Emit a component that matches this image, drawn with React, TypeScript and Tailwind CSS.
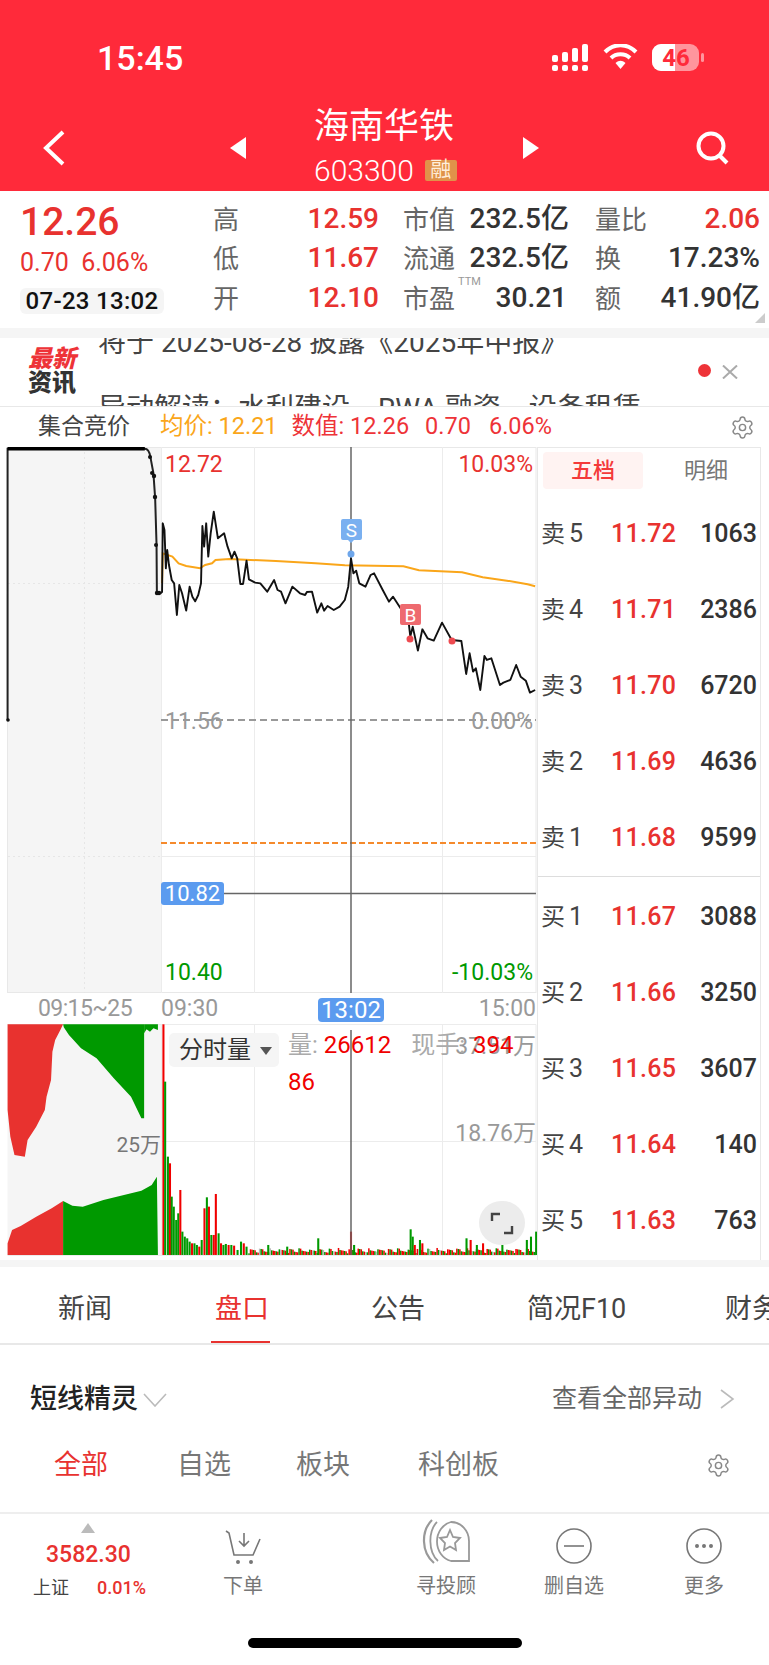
import React from "react";
import { Settings } from "lucide-react";

const PRICE_LINE =
  "M470,458 L472,250 L477,270 L481,385 L485,330 L490,375 L498,420 L505,430 L513,525 L520,435 L528,460 L540,512 L550,440 L558,470 L566,484 L575,465 L583,430 L587,258 L592,320 L598,250 L604,350 L611,280 L620,215 L632,295 L650,280 L660,320 L672,355 L680,335 L688,355 L697,432 L705,432 L715,362 L722,418 L740,428 L755,430 L775,455 L795,420 L805,450 L815,455 L828,490 L848,440 L870,460 L885,465 L890,456 L905,455 L920,518 L932,490 L940,512 L950,498 L968,510 L985,500 L1000,480 L1010,440 L1018,355 L1025,400 L1033,392 L1042,430 L1060,440 L1075,405 L1085,400 L1110,450 L1128,485 L1140,470 L1165,510 L1175,515 L1185,545 L1190,590 L1197,560 L1212,632 L1225,568 L1240,595 L1258,602 L1282,548 L1310,600 L1338,603 L1352,702 L1362,640 L1372,695 L1380,685 L1393,750 L1405,648 L1412,660 L1425,655 L1450,735 L1460,728 L1480,720 L1497,675 L1510,710 L1525,722 L1537,758 L1552,750";
const AVG_LINE =
  "M470,430 L472,340 L500,350 L518,370 L540,378 L580,385 L595,375 L615,370 L625,360 L665,357 L800,363 L915,370 L1000,376 L1170,379 L1215,391 L1340,397 L1400,412 L1470,422 L1530,433 L1552,439";
const AUCTION_LINE = "M22,840 L22,26 L420,26 Q432,26 436,50 L445,100 L450,175 L454,315 L455,458 L470,458";

const BIG_BARS: [number, number, string][] = [
  [471, 133, "#f00000"], [476, 305, "#009900"], [484, 530, "#009900"], [490, 550, "#f00000"],
  [495, 650, "#009900"], [501, 680, "#009900"], [508, 720, "#009900"], [514, 700, "#009900"],
  [520, 630, "#f00000"], [526, 755, "#009900"], [533, 770, "#009900"], [540, 775, "#009900"],
  [547, 785, "#009900"], [554, 790, "#f00000"], [561, 790, "#009900"], [568, 795, "#009900"],
  [575, 800, "#f00000"], [582, 780, "#009900"], [590, 685, "#f00000"], [597, 652, "#009900"],
  [603, 680, "#f00000"], [610, 765, "#009900"], [617, 765, "#f00000"], [623, 642, "#f00000"],
  [631, 760, "#009900"], [638, 790, "#f00000"], [645, 795, "#009900"], [652, 792, "#009900"],
  [660, 795, "#f00000"], [668, 795, "#009900"], [676, 797, "#f00000"], [686, 810, "#009900"],
  [696, 785, "#009900"], [704, 790, "#f00000"], [712, 800, "#009900"], [775, 795, "#009900"],
  [830, 800, "#009900"], [920, 775, "#009900"], [1015, 755, "#f00000"], [1024, 795, "#009900"],
  [1188, 748, "#009900"], [1194, 770, "#009900"], [1200, 795, "#f00000"], [1215, 780, "#009900"],
  [1222, 790, "#f00000"], [1350, 775, "#009900"], [1362, 780, "#f00000"], [1380, 795, "#009900"],
  [1398, 790, "#f00000"], [1454, 795, "#009900"], [1525, 780, "#009900"], [1537, 770, "#009900"],
  [1552, 755, "#009900"],
];

// the low bars between the spikes
const LOW_BARS: [number, number, string][] = Array.from({ length: 190 }, (_, i) => {
  const x = 720 + i * 4.4;
  const top = 820 - ((i * 37) % 13) - ((i * 11) % 5);
  const c = (i * 7) % 5 < 2 ? "#009900" : (i * 13) % 7 === 0 ? "#bbbbbb" : "#f00000";
  return [x, top, c];
});

const SELLS = [
  ["卖", "5", "11.72", "1063"],
  ["卖", "4", "11.71", "2386"],
  ["卖", "3", "11.70", "6720"],
  ["卖", "2", "11.69", "4636"],
  ["卖", "1", "11.68", "9599"],
];
const BUYS = [
  ["买", "1", "11.67", "3088"],
  ["买", "2", "11.66", "3250"],
  ["买", "3", "11.65", "3607"],
  ["买", "4", "11.64", "140"],
  ["买", "5", "11.63", "763"],
];

function StatusIcons() {
  return (
    <svg width="153" height="28" viewBox="552 44 153 28" className="block">
      <g fill="#fff">
        <rect x="552" y="55" width="6" height="7" rx="2" />
        <rect x="562" y="52" width="6" height="10" rx="2" />
        <rect x="572" y="48" width="6" height="14" rx="2" />
        <rect x="582" y="44" width="6" height="18" rx="2" />
        <rect x="552" y="65" width="6" height="6" rx="2" />
        <rect x="562" y="65" width="6" height="6" rx="2" />
        <rect x="572" y="65" width="6" height="6" rx="2" />
        <rect x="582" y="65" width="6" height="6" rx="2" />
      </g>
      <path d="M605 52 C614 43 627 43 636 52" stroke="#fff" strokeWidth="4" fill="none" />
      <path d="M611 58 C616 53 625 53 630 58" stroke="#fff" strokeWidth="4" fill="none" />
      <path d="M615.5 63 L620.5 69 L625.5 63 C622 60 619 60 615.5 63 Z" fill="#fff" />
      <rect x="652" y="44" width="47" height="27" rx="9" fill="#fff" fillOpacity="0.5" />
      <path d="M661 44 H675 V71 H661 A9 9 0 0 1 652 62 V53 A9 9 0 0 1 661 44 Z" fill="#fff" />
      <rect x="701" y="53" width="3" height="9" rx="1.5" fill="#fff" fillOpacity="0.5" />
      <text x="676" y="66" textAnchor="middle" fontSize="24" fontWeight="700" fill="#ff2a3a">46</text>
    </svg>
  );
}

function Stat({ label, value, red, ttm }: { label: string; value: string; red?: boolean; ttm?: boolean }) {
  return (
    <div className="flex h-[39.5px] items-center justify-between">
      <span className="relative mt-[3px] text-[26px] text-[#666666]">
        {label}
        {ttm && <span className="absolute left-[55px] top-[-6px] text-[11px] text-[#999999]">TTM</span>}
      </span>
      <span className={`text-[28px] font-medium ${red ? "text-[#e8322f]" : "text-[#333333]"} ${ttm ? "mr-[2px]" : ""}`}>{value}</span>
    </div>
  );
}

function BookRow({ row }: { row: string[] }) {
  return (
    <div className="flex h-[76px] items-center pl-[3px] pr-[3px]">
      <span className="w-[28px] text-[24px] text-[#444444]">{row[0]}</span>
      <span className="w-[42px] text-[25px] text-[#444444]">{row[1]}</span>
      <span className="text-[25px] font-medium tracking-[0.3px] text-[#e8322f]">{row[2]}</span>
      <span className="ml-auto text-[25px] font-medium text-[#333333]">{row[3]}</span>
    </div>
  );
}

function ToolButton({ label, children, width }: { label: string; children: React.ReactNode; width: string }) {
  return (
    <div className={`flex flex-col items-center ${width}`}>
      <div className="flex h-[46px] items-end justify-center">{children}</div>
      <span className="mt-[10px] whitespace-nowrap text-[20px] leading-[24px] text-[#777777]">{label}</span>
    </div>
  );
}

export default function App() {
  return (
    <div className="h-[1665px] w-[769px] overflow-hidden bg-white font-[Roboto,'Noto_Sans_CJK_SC',sans-serif]">
      {/* header */}
      <div className="h-[191px] bg-[#ff2a3a] text-white">
        <div className="flex h-[105px] items-start pt-[44px]">
          <span className="ml-[97px] text-[34px] font-medium leading-[28px]">15:45</span>
          <div className="ml-auto mr-[64px]"><StatusIcons /></div>
        </div>
        <div className="flex items-start">
          <svg width="24" height="36" viewBox="0 0 24 36" className="ml-[42px] mt-[25px]">
            <path d="M21 2 L4 18 L21 34" stroke="#fff" strokeWidth="4" fill="none" />
          </svg>
          <svg width="16" height="22" viewBox="0 0 16 22" className="ml-[164px] mt-[32px]">
            <path d="M16 0 V22 L0 11 Z" fill="#fff" />
          </svg>
          <div className="ml-[68px] w-[209px]">
            <div className="text-[35px] leading-[44px]">海南华铁</div>
            <div className="mt-[9px] flex h-[24px] items-center">
              <span className="text-[30px] font-light">603300</span>
              <span className="ml-[11px] flex h-[21px] w-[32px] items-center justify-center rounded-[2px] bg-[#e0934a] text-[21px] text-[#ffeeda]">融</span>
            </div>
          </div>
          <svg width="16" height="22" viewBox="0 0 16 22" className="mt-[32px]">
            <path d="M0 0 V22 L16 11 Z" fill="#fff" />
          </svg>
          <svg width="34" height="34" viewBox="0 0 34 34" className="ml-[157px] mt-[26px]">
            <circle cx="15" cy="15" r="12.5" stroke="#fff" strokeWidth="4" fill="none" />
            <path d="M23 24 L31 32" stroke="#fff" strokeWidth="4" fill="none" />
          </svg>
        </div>
      </div>

      {/* quote */}
      <div className="relative flex h-[137px]">
        <div className="ml-[20px] w-[193px]">
          <div className="mt-[8px] text-[39px] font-medium leading-[46px] text-[#e8322f]">12.26</div>
          <div className="mt-[2px] text-[25px] leading-[32px] text-[#e8322f]">0.70&nbsp;&nbsp;6.06%</div>
          <div className="mt-[9px] flex h-[26px] w-[144px] items-center justify-center rounded-[6px] bg-[#f5f5f5] text-[24px] font-medium tracking-[0.3px] text-[#111111]">07-23 13:02</div>
        </div>
        <div className="mt-[8px] w-[166px]">
          <Stat label="高" value="12.59" red />
          <Stat label="低" value="11.67" red />
          <Stat label="开" value="12.10" red />
        </div>
        <div className="ml-[24px] mt-[8px] w-[166px]">
          <Stat label="市值" value="232.5亿" />
          <Stat label="流通" value="232.5亿" />
          <Stat label="市盈" value="30.21" ttm />
        </div>
        <div className="ml-[26px] mt-[8px] w-[165px]">
          <Stat label="量比" value="2.06" red />
          <Stat label="换" value="17.23%" />
          <Stat label="额" value="41.90亿" />
        </div>
        <div className="absolute bottom-[5px] right-[4px] h-0 w-0 border-b-[10px] border-l-[10px] border-b-[#cccccc] border-l-transparent" />
      </div>
      <div className="h-[10px] bg-[#f5f5f5]" />

      {/* news ticker, caught mid scroll */}
      <div className="relative h-[68px] overflow-hidden">
        <div className="ml-[98px] mt-[-13px] whitespace-nowrap text-[28px] leading-[36px] text-[#444444]">将于 2025-08-28 披露《2025年中报》</div>
        <div className="ml-[98px] mt-[30px] whitespace-nowrap text-[28px] leading-[36px] text-[#444444]">异动解读：水利建设、RWA 融资、设备租赁...</div>
        <div className="absolute left-[28px] top-[10px] text-[24px] font-black italic leading-[22px] text-[#ee3338]">最新</div>
        <div className="absolute left-[28px] top-[34px] text-[24px] font-black leading-[22px] text-[#333333]">资讯</div>
        <div className="absolute left-[698px] top-[26px] h-[13px] w-[13px] rounded-full bg-[#ee3338]" />
        <svg width="16" height="14" viewBox="0 0 16 14" className="absolute left-[722px] top-[27px]">
          <path d="M1 0.5 L15 13.5 M15 0.5 L1 13.5" stroke="#aaaaaa" strokeWidth="2" />
        </svg>
      </div>

      {/* chart title */}
      <div className="flex h-[41px] items-center border-t border-[#e8e8e8] text-[23.5px]">
        <span className="ml-[38px] text-[23px] text-[#444444]">集合竞价</span>
        <span className="ml-[30px] text-[#faa61a]">均价: 12.21</span>
        <span className="ml-[14px] text-[#ee3338]">数值: 12.26</span>
        <span className="ml-[16px] text-[#ee3338]">0.70</span>
        <span className="ml-[18px] text-[#ee3338]">6.06%</span>
        <Settings className="ml-auto mr-[14px] h-[25px] w-[25px] text-[#888888]" strokeWidth={1.4} />
      </div>

      <div className="flex h-[813px]">
        <div className="w-[537px]">
          {/* price chart */}
          <div className="relative h-[546px]">
            <svg width="537" height="546" viewBox="0 447 537 546" className="absolute inset-0">
              <rect x="7.5" y="447.5" width="153.5" height="545" fill="#f5f5f5" />
              <rect x="7.5" y="447.5" width="528.5" height="545" fill="none" stroke="#e8e8e8" />
              <path d="M161.5 447 V993 M254.5 447 V993 M442.5 447 V993 M161 583.5 H536 M161 856.5 H536" stroke="#ececec" />
              <path d="M84.5 447 V993 M8 583.5 H161 M8 856.5 H161" stroke="#e6e6e6" strokeDasharray="2 3" />
              <path d="M161 720 H536" stroke="#999999" strokeDasharray="7 4" strokeWidth="2" />
              <path d="M161 843 H536" stroke="#f58a2c" strokeDasharray="6 3" strokeWidth="2" />
              <path d="M224 893.5 H536" stroke="#666666" strokeWidth="1.5" />
              <path d="M351 447 V993" stroke="#666666" strokeWidth="1.5" />
              <g transform="translate(0 440) scale(0.3448 0.3333)" fill="none">
                <path d={AVG_LINE} stroke="#faa61a" strokeWidth="2" vectorEffect="non-scaling-stroke" />
                <path d={AUCTION_LINE} stroke="#222222" strokeWidth="2" vectorEffect="non-scaling-stroke" />
                <path d="M22,26 L420,26" stroke="#000" strokeWidth="3.5" vectorEffect="non-scaling-stroke" />
                <path d={PRICE_LINE} stroke="#111111" strokeWidth="1.9" strokeLinejoin="round" vectorEffect="non-scaling-stroke" />
              </g>
              <g fill="#111111">
                <circle cx="8" cy="720" r="1.8" />
                <circle cx="150" cy="457" r="2" />
                <circle cx="152" cy="473" r="2" />
                <circle cx="154" cy="476" r="2.2" />
                <circle cx="155" cy="497" r="2.2" />
                <circle cx="156" cy="545" r="2" />
                <circle cx="157" cy="593" r="2.2" />
                <circle cx="159" cy="593" r="2.2" />
              </g>
              <path d="M343 519 H360 A2 2 0 0 1 362 521 V538 A2 2 0 0 1 360 540 H354 L351 543 L348 540 H343 A2 2 0 0 1 341 538 V521 A2 2 0 0 1 343 519 Z" fill="#7ab0f0" />
              <text x="351.5" y="537" textAnchor="middle" fontSize="19" fill="#fff">S</text>
              <circle cx="351" cy="554" r="3.5" fill="#6ea6ea" />
              <rect x="400" y="604" width="21" height="21" rx="2" fill="#ee6a6f" />
              <text x="410.5" y="622" textAnchor="middle" fontSize="19" fill="#fff">B</text>
              <circle cx="410" cy="639" r="3.5" fill="#ee4a50" />
              <circle cx="452" cy="641" r="3.5" fill="#ee4a50" />
            </svg>
            <span className="absolute left-[165px] top-[1px] text-[23px] text-[#e8322f]">12.72</span>
            <span className="absolute right-[4px] top-[1px] text-[23px] text-[#e8322f]">10.03%</span>
            <span className="absolute left-[165px] top-[258px] text-[23px] text-[#999999]">11.56</span>
            <span className="absolute right-[4px] top-[258px] text-[23px] text-[#999999]">0.00%</span>
            <span className="absolute left-[161px] top-[435px] flex h-[23px] w-[63px] items-center justify-center rounded-[3px] bg-[#5b9bef] text-[22px] text-white">10.82</span>
            <span className="absolute left-[165px] top-[509px] text-[23px] text-[#009900]">10.40</span>
            <span className="absolute right-[4px] top-[509px] text-[23px] text-[#009900]">-10.03%</span>
          </div>

          {/* time axis */}
          <div className="relative flex h-[31px] items-center pt-[2px] text-[23px] text-[#999999]">
            <span className="ml-[38px] w-[123px] tracking-[-0.6px]">09:15~25</span>
            <span className="w-[157px]">09:30</span>
            <span className="flex h-[24px] w-[66px] items-center justify-center rounded-[4px] bg-[#5b9bef] text-[24px] text-white">13:02</span>
            <span className="ml-auto mr-[1px]">15:00</span>
          </div>

          {/* volume */}
          <div className="relative h-[236px]">
            <svg width="537" height="236" viewBox="0 1024 537 236" className="absolute inset-0">
              <rect x="7.5" y="1024" width="153.5" height="231" fill="#f5f5f5" />
              <path d="M7.5 1024.5 H536 V1255.5 H7.5 M161.5 1024 V1255 M254.5 1024 V1255 M442.5 1024 V1255 M161 1141.5 H536" stroke="#ececec" fill="none" />
              <g transform="translate(0 980) scale(0.3448 0.3333)">
                <path d="M22,133 L183,133 L175,150 L160,180 L152,215 L148,300 L135,350 L130,390 L105,440 L80,480 L72,530 L42,525 L30,470 L22,390 Z" fill="#e8322f" />
                <path d="M183,133 L418,133 L418,415 L410,415 L380,350 L330,295 L280,235 L235,205 L200,165 L185,142 Z" fill="#009900" />
                <path d="M418,133 L458,133 L458,150 L445,145 L435,155 L425,148 L418,160 Z" fill="#009900" />
                <path d="M22,825 L22,790 L35,750 L60,738 L105,710 L150,685 L183,663 L183,825 Z" fill="#e8322f" />
                <path d="M183,825 L183,663 L210,677 L240,680 L300,660 L410,632 L440,615 L455,590 L458,825 Z" fill="#009900" />
                {LOW_BARS.map(([x, top, c], i) => (
                  <rect key={i} x={x} y={top} width="4.4" height={825 - top} fill={c} />
                ))}
                {BIG_BARS.map(([x, top, c], i) => (
                  <rect key={i} x={x} y={top} width="6" height={825 - top} fill={c} />
                ))}
              </g>
              <path d="M351 1030 V1255" stroke="#666666" strokeWidth="1.5" />
            </svg>
            <span className="absolute right-[376px] top-[106px] text-[21px] text-[#777777]">25万</span>
            <span className="absolute right-[1px] top-[6px] text-[23px] text-[#999999]">37.51万</span>
            <span className="absolute right-[1px] top-[93px] text-[23px] text-[#999999]">18.76万</span>
            <div className="absolute left-[169px] top-[9px] flex h-[34px] w-[110px] items-center rounded-[5px] bg-[#f5f5f5] pl-[10px] text-[24px] text-[#333333]">
              分时量
              <span className="ml-[9px] mt-[2px] h-0 w-0 border-x-[6px] border-t-[8px] border-x-transparent border-t-[#555555]" />
            </div>
            <div className="absolute left-[288px] top-[3px] w-[240px] text-[24px] leading-[37px] text-[#f00000]">
              <span className="text-[#aaaaaa]">量:</span> 26612
              <span className="ml-[20px] text-[#aaaaaa]">现手:</span>
              <span className="ml-[8px]">394</span>
              <br />
              86
            </div>
            <div className="absolute left-[479px] top-[177px] flex h-[44px] w-[46px] items-center justify-center rounded-full bg-[#ececec]">
              <svg width="24" height="23" viewBox="0 0 24 23">
                <path d="M10 2 H2 V9 M14 21 H22 V14" stroke="#444444" strokeWidth="2.4" fill="none" />
              </svg>
            </div>
          </div>
        </div>

        {/* order book */}
        <div className="w-[224px] border-x border-t border-[#e8e8e8]">
          <div className="ml-[5px] mt-[4px] flex h-[37px] items-center text-[22px]">
            <span className="flex h-full w-[100px] items-center justify-center rounded-[4px] bg-[#fff3f2] font-medium text-[#f43a3a]">五档</span>
            <span className="ml-[41px] text-[#777777]">明细</span>
          </div>
          <div className="h-[7px]" />
          <div className="border-b border-[#dddddd]">
            {SELLS.map((r) => <BookRow key={r[0] + r[1]} row={r} />)}
          </div>
          <div className="pt-[2px]">
            {BUYS.map((r) => <BookRow key={r[0] + r[1]} row={r} />)}
          </div>
        </div>
      </div>
      <div className="h-[7px] bg-[#f5f5f5]" />

      {/* tabs */}
      <div className="relative flex h-[78px] items-center overflow-hidden border-b-2 border-[#e8e8e8] pt-[8px] text-[27px] text-[#444444]">
        <span className="ml-[58px]">新闻</span>
        <span className="ml-[103px] text-[#e8322f]">盘口</span>
        <span className="ml-[102px]">公告</span>
        <span className="ml-[102px]">简况F10</span>
        <span className="absolute left-[725px] whitespace-nowrap">财务分析</span>
        <div className="absolute bottom-[-2px] left-[211px] h-[4px] w-[59px] bg-[#e8322f]" />
      </div>

      {/* short line */}
      <div className="flex h-[74px] items-end">
        <span className="ml-[30px] text-[27px] font-medium leading-[40px] text-[#222222]">短线精灵</span>
        <svg width="24" height="14" viewBox="0 0 24 14" className="mb-[12px] ml-[5px]">
          <path d="M1 1 L12 13 L23 1" stroke="#bbbbbb" strokeWidth="1.6" fill="none" />
        </svg>
        <span className="ml-auto text-[25px] leading-[40px] text-[#666666]">查看全部异动</span>
        <svg width="15" height="20" viewBox="0 0 15 20" className="mb-[10px] ml-[18px] mr-[34px]">
          <path d="M1 1 L13 10 L1 19" stroke="#bbbbbb" strokeWidth="1.6" fill="none" />
        </svg>
      </div>
      <div className="mt-[26px] flex h-[40px] items-center text-[27px] text-[#777777]">
        <span className="ml-[54px] text-[#e8322f]">全部</span>
        <span className="ml-[69px]">自选</span>
        <span className="ml-[65px]">板块</span>
        <span className="ml-[68px]">科创板</span>
        <Settings className="ml-auto mr-[38px] h-[25px] w-[25px] text-[#888888]" strokeWidth={1.4} />
      </div>

      {/* bottom bar */}
      <div className="mt-[27px] flex h-[152px] border-t-2 border-[#eeeeee]">
        <div className="ml-[33px] w-[116px]">
          <div className="ml-[48px] mt-[9px] h-0 w-0 border-x-[7px] border-b-[10px] border-x-transparent border-b-[#bbbbbb]" />
          <div className="ml-[13px] mt-[7px] text-[23px] font-medium leading-[30px] text-[#e8322f]">3582.30</div>
          <div className="mt-[6px] flex text-[18px] leading-[24px]">
            <span className="text-[#444444]">上证</span>
            <span className="ml-[28px] font-medium text-[#e8322f]">0.01%</span>
          </div>
        </div>
        <div className="mt-[4px] flex">
          <ToolButton label="下单" width="w-[40px] ml-[74px]">
            <svg width="36" height="34" viewBox="0 0 36 34" fill="none" stroke="#777777" strokeWidth="1.6">
              <path d="M1 1 L4 3 L9 25 H28 L35 9" />
              <path d="M19 3 V16 M14 11 L19 16 L24 11" />
              <circle cx="13" cy="32" r="1.2" fill="#777777" />
              <circle cx="26" cy="32" r="1.2" fill="#777777" />
            </svg>
          </ToolButton>
          <ToolButton label="寻投顾" width="w-[60px] ml-[153px]">
            <svg width="48" height="45" viewBox="0 0 48 45" fill="none" stroke="#999999" strokeWidth="1.8">
              <path d="M10 1 C-1 12 -1 33 12 44" strokeWidth="2.2" />
              <path d="M15 3 C6 12 6 33 16 42" />
              <path d="M29 3 A18 19 0 0 1 47 22 V42 H29 A18 20 0 0 1 29 3 Z" />
              <path d="M28 11 L31 18 L38 19 L33 24 L34 31 L28 27.5 L22 31 L23 24 L18 19 L25 18 Z" />
            </svg>
          </ToolButton>
          <ToolButton label="删自选" width="w-[60px] ml-[68px]">
            <svg width="36" height="36" viewBox="0 0 36 36" fill="none" stroke="#777777" strokeWidth="1.6">
              <circle cx="18" cy="18" r="17" />
              <path d="M8 18 H28" />
            </svg>
          </ToolButton>
          <ToolButton label="更多" width="w-[40px] ml-[80px]">
            <svg width="36" height="36" viewBox="0 0 36 36" fill="none" stroke="#777777" strokeWidth="1.6">
              <circle cx="18" cy="18" r="17" />
              <circle cx="11" cy="18" r="1.2" fill="#777777" />
              <circle cx="18" cy="18" r="1.2" fill="#777777" />
              <circle cx="25" cy="18" r="1.2" fill="#777777" />
            </svg>
          </ToolButton>
        </div>
      </div>
      <div className="ml-[248px] mt-[-26px] h-[10px] w-[274px] rounded-full bg-black" />
    </div>
  );
}
